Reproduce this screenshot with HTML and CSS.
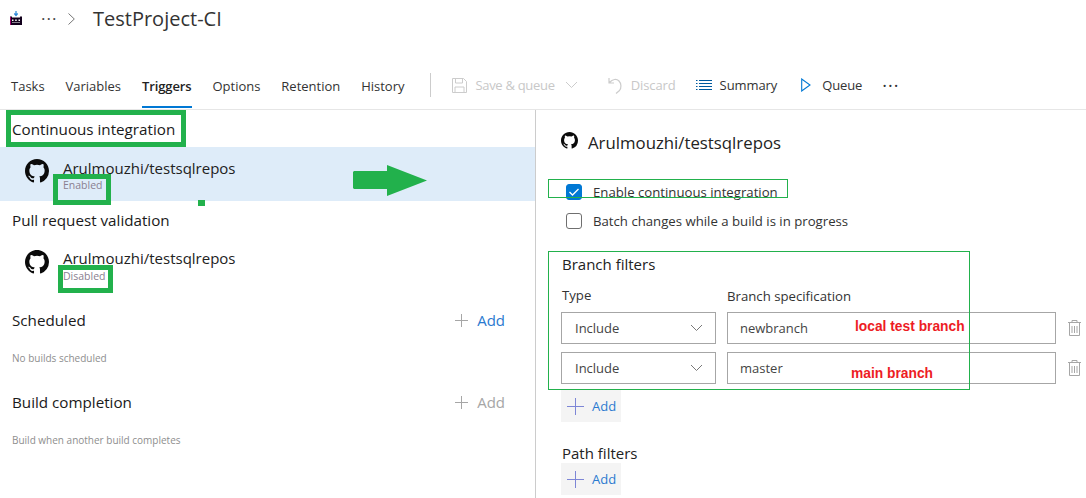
FILE: index.html
```html
<!DOCTYPE html>
<html lang="en">

    <head>
        <meta charset="UTF-8">
        <title>TestProject-CI</title>
        <link rel="stylesheet" href="styles.css">
    </head>

    <body>

        <header class="breadcrumb">
            <svg class="build-icon" width="12" height="14" viewBox="0 0 12 14">
                <path d="M6 0v4M4.300 2.500L6 4.500l1.700-2" fill="none" stroke="#2b88d8" stroke-width="1.200"/>
                <path d="M0 5.500h2v1h8v-1h2V14H0z" fill="#12001c"/>
                <path d="M2 8.500h1.500V10H2zM5.200 8.500h1.500V10H5.200zM8.500 8.500H10V10H8.500zM2 11.500h8V12H2z" fill="#fff"/>
                <path d="M.5 6v8" stroke="#a4006e" stroke-width="1"/>
            </svg>
            <span class="dots">···</span>
            <svg class="crumb-chevron" width="7" height="12" viewBox="0 0 7 12">
                <path d="M.5.500L6.300 6 .5 11.500" fill="none" stroke="#777" stroke-width="1"/>
            </svg>
            <h1>TestProject-CI</h1>
        </header>

        <nav class="toolbar">
            <div class="tab">Tasks</div>
            <div class="tab">Variables</div>
            <div class="tab active">Triggers</div>
            <div class="tab">Options</div>
            <div class="tab">Retention</div>
            <div class="tab">History</div>
            <div class="divider"></div>
            <div class="cmd disabled save">
                <svg width="15" height="15" viewBox="0 0 15 15">
                    <path d="M.5.500h11l3 3v11H.5zM3.500 1v4h7V1M3 14.500V9h9v5.500" fill="none" stroke="#ccc"/>
                </svg>
                <span>Save &amp; queue</span>
                <svg class="save-chevron" width="13" height="8" viewBox="0 0 13 8">
                    <path d="M1 1l5.500 5.500L12 1" fill="none" stroke="#ccc"/>
                </svg>
            </div>
            <div class="cmd disabled discard">
                <svg width="14" height="17" viewBox="0 0 14 17">
                    <path d="M1 1v5h5M1.500 5.500C4.500 2 8.500 1.500 11 4s2.500 7 .5 9.500L8 16.500" fill="none" stroke="#ccc" stroke-width="1.200"/>
                </svg>
                <span>Discard</span>
            </div>
            <div class="cmd summary">
                <svg width="16" height="11" viewBox="0 0 16 11">
                    <path d="M0 .500h1.500M3 .500h13M0 3.500h1.500M3 3.500h13M0 6.500h1.500M3 6.500h13M0 9.500h1.500M3 9.500h13" stroke="#005a9e"/>
                </svg>
                <span>Summary</span>
            </div>
            <div class="cmd queue">
                <svg width="10" height="14" viewBox="0 0 10 14">
                    <path d="M.7 1v12l8.300-6z" fill="none" stroke="#0078d4" stroke-width="1.100"/>
                </svg>
                <span>Queue</span>
            </div>
            <div class="more">···</div>
        </nav>

        <main class="content">
            <section class="left">
                <h2 class="ci-title">Continuous integration</h2>
                <div class="repo selected">
                    <svg class="gh" width="24" height="24" viewBox="0 0 16 16">
                        <path d="M8 0C3.580 0 0 3.580 0 8c0 3.540 2.290 6.530 5.470 7.590.4.070.55-.17.55-.38v-1.340c-2.230.48-2.700-1.070-2.700-1.070-.36-.930-.89-1.170-.89-1.170-.73-.5.050-.49.050-.49.800.060 1.220.830 1.220.830.710 1.220 1.870.870 2.330.660.070-.520.280-.870.510-1.070-1.780-.2-3.640-.89-3.640-3.950 0-.870.310-1.590.820-2.150-.080-.2-.360-1.020.080-2.120 0 0 .670-.210 2.200.820a7.600 7.600 0 0 1 4 0c1.530-1.040 2.200-.820 2.200-.820.440 1.100.160 1.920.080 2.120.510.560.820 1.270.820 2.150 0 3.070-1.870 3.750-3.650 3.950.290.250.540.730.540 1.480v2.200c0 .210.150.460.550.380A8 8 0 0 0 16 8c0-4.420-3.580-8-8-8z" fill="#0b0b0b"/>
                    </svg>
                    <div class="repo-text">
                        <div class="repo-name">Arulmouzhi/testsqlrepos</div>
                        <div class="repo-state">Enabled</div>
                    </div>
                </div>
                <h2 class="pr-title">Pull request validation</h2>
                <div class="repo">
                    <svg class="gh" width="24" height="24" viewBox="0 0 16 16">
                        <path d="M8 0C3.580 0 0 3.580 0 8c0 3.540 2.290 6.530 5.470 7.590.4.070.55-.17.55-.38v-1.340c-2.230.48-2.700-1.070-2.700-1.070-.36-.930-.89-1.170-.89-1.170-.73-.5.050-.49.050-.49.800.060 1.220.830 1.220.830.710 1.220 1.870.870 2.330.660.070-.520.280-.870.510-1.070-1.780-.2-3.640-.89-3.640-3.950 0-.870.310-1.590.820-2.150-.080-.2-.360-1.020.080-2.120 0 0 .670-.210 2.200.820a7.600 7.600 0 0 1 4 0c1.530-1.040 2.200-.820 2.200-.820.440 1.100.160 1.920.080 2.120.510.560.820 1.270.820 2.150 0 3.070-1.870 3.750-3.650 3.950.290.250.540.730.540 1.480v2.200c0 .210.150.460.550.380A8 8 0 0 0 16 8c0-4.420-3.580-8-8-8z" fill="#0b0b0b"/>
                    </svg>
                    <div class="repo-text">
                        <div class="repo-name">Arulmouzhi/testsqlrepos</div>
                        <div class="repo-state">Disabled</div>
                    </div>
                </div>
                <div class="add-head scheduled">
                    <h2>Scheduled</h2>
                    <div class="add-link"><span class="plus"></span>Add</div>
                </div>
                <p class="hint">No builds scheduled</p>
                <div class="add-head completion">
                    <h2>Build completion</h2>
                    <div class="add-link off"><span class="plus"></span>Add</div>
                </div>
                <p class="hint">Build when another build completes</p>
            </section>

            <section class="right">
                <div class="right-title">
                    <svg width="17" height="17" viewBox="0 0 16 16">
                        <path d="M8 0C3.580 0 0 3.580 0 8c0 3.540 2.290 6.530 5.470 7.590.4.070.55-.17.55-.38v-1.340c-2.230.48-2.700-1.070-2.700-1.070-.36-.930-.89-1.170-.89-1.170-.73-.5.050-.49.050-.49.800.060 1.220.830 1.220.830.710 1.220 1.870.870 2.330.660.070-.520.280-.870.510-1.070-1.780-.2-3.640-.89-3.640-3.950 0-.870.310-1.590.82-2.150-.080-.2-.360-1.020.080-2.120 0 0 .670-.210 2.200.82a7.600 7.600 0 0 1 4 0c1.530-1.040 2.200-.820 2.200-.820.440 1.100.160 1.920.080 2.120.510.560.820 1.270.820 2.150 0 3.070-1.870 3.750-3.650 3.950.290.250.540.730.540 1.480v2.200c0 .210.150.460.550.380A8 8 0 0 0 16 8c0-4.420-3.580-8-8-8z" fill="#0b0b0b"/>
                    </svg>
                    <span>Arulmouzhi/testsqlrepos</span>
                </div>
                <div class="check-row first">
                    <span class="checkbox on">
                        <svg width="12" height="10" viewBox="0 0 12 10"><path d="M1.500 5l3 3L10.500 2" fill="none" stroke="#fff" stroke-width="1.300"/></svg>
                    </span>
                    Enable continuous integration
                </div>
                <div class="check-row">
                    <span class="checkbox"></span>
                    Batch changes while a build is in progress
                </div>
                <h3 class="branch-title">Branch filters</h3>
                <div class="filter-labels">
                    <label class="type-label">Type</label>
                    <label class="spec-label">Branch specification</label>
                </div>
                <div class="filter-row">
                    <div class="select">Include
                        <svg width="13" height="8" viewBox="0 0 13 8"><path d="M1 1l5.500 5.500L12 1" fill="none" stroke="#777"/></svg>
                    </div>
                    <div class="input">newbranch</div>
                    <svg class="trash" width="13" height="16" viewBox="0 0 13 16">
                        <path d="M0 2.500h13M4 2.500V.500h5v2M1.500 3v12.500h10V3M4 6v7M6.500 6v7M9 6v7" fill="none" stroke="#a6a6a6"/>
                    </svg>
                </div>
                <div class="filter-row">
                    <div class="select">Include
                        <svg width="13" height="8" viewBox="0 0 13 8"><path d="M1 1l5.500 5.500L12 1" fill="none" stroke="#777"/></svg>
                    </div>
                    <div class="input">master</div>
                    <svg class="trash" width="13" height="16" viewBox="0 0 13 16">
                        <path d="M0 2.500h13M4 2.500V.500h5v2M1.500 3v12.500h10V3M4 6v7M6.500 6v7M9 6v7" fill="none" stroke="#a6a6a6"/>
                    </svg>
                </div>
                <div class="add-btn"><span class="plus"></span>Add</div>
                <h3 class="path-title">Path filters</h3>
                <div class="add-btn"><span class="plus"></span>Add</div>
            </section>
        </main>

        <!-- annotations drawn on top of the screenshot -->
        <div class="mark mark-ci"></div>
        <div class="mark mark-enabled"></div>
        <div class="mark mark-disabled"></div>
        <div class="mark-dot"></div>
        <svg class="mark-arrow" width="76" height="32" viewBox="0 0 76 32">
            <path d="M2 6h33V0l40 15.500L35 31v-7H2l-1-1V7z" fill="#22b14c"/>
        </svg>
        <div class="thin-box box-check"></div>
        <div class="thin-box box-branch"></div>
        <div class="note note-local">local test branch</div>
        <div class="note note-main">main branch</div>

    </body>

</html>
```

FILE: styles.css
```css
* {
    box-sizing: border-box;
}

html,
body {
    height: 100%;
}

body {
    margin: 0;
    position: relative;
    overflow: hidden;
    background-color: #fff;
    color: #1a1a1a;
    font-family: "Open Sans", "Noto Sans", Arial, sans-serif;
    font-size: 13px;
}

h1,
h2,
h3,
p {
    margin: 0;
    font-weight: 400;
}

.breadcrumb {
    height: 70px;
    padding: 7px 0 0 10px;
    display: flex;
    align-items: flex-start;
}

.build-icon {
    margin-top: 4px;
}

.dots {
    margin: 0 0 0 19px;
    width: 18px;
    font-size: 17px;
    line-height: 24px;
    letter-spacing: 1px;
    color: #444;
}

.crumb-chevron {
    margin: 6px 0 0 9px;
}

.breadcrumb h1 {
    margin-left: 18px;
    font-size: 20px;
    line-height: 24px;
    color: #333;
}

.toolbar {
    height: 40px;
    padding-left: 11px;
    display: flex;
    align-items: flex-start;
    border-bottom: 1px solid #e6e6e6;
}

.tab {
    height: 38px;
    margin-right: 20.900px;
    padding-top: 7px;
    line-height: 18px;
    font-size: 13px;
    color: #333;
}

.tab.active {
    position: relative;
    font-weight: 600;
    letter-spacing: -.1px;
    color: #222;
}

.tab.active::after {
    content: "";
    position: absolute;
    left: 0;
    right: 0;
    bottom: 0;
    height: 2px;
    background-color: #0078d4;
}

.divider {
    width: 1px;
    height: 24px;
    margin: 3px 0 0 5px;
    background-color: #ccc;
}

.cmd {
    display: flex;
    align-items: center;
    gap: 8px;
    height: 30px;
    font-size: 13px;
    letter-spacing: -.1px;
    color: #333;
}

.cmd.disabled {
    color: #c8c8c8;
}

.save {
    margin-left: 21px;
    letter-spacing: -.3px;
}

.save-chevron {
    margin-left: 2px;
}

.discard {
    margin-left: 30px;
    gap: 9px;
}

.summary {
    margin-left: 20px;
}

.queue {
    margin-left: 24px;
    gap: 11px;
}

.more {
    margin-left: 20px;
    font-size: 18px;
    line-height: 30px;
    letter-spacing: 1px;
    color: #333;
}

.content {
    height: 388px;
    display: flex;
}

.left {
    width: 536px;
    border-right: 1px solid #ccc;
}

.left h2 {
    font-size: 15.200px;
    line-height: 20px;
    color: #1a1a1a;
}

.ci-title {
    padding: 9px 0 8px 12px;
}

.pr-title {
    padding: 9px 0 0 12px;
}

.repo {
    height: 54px;
    padding: 10px 0 0 25px;
    display: flex;
    gap: 14px;
}

.repo.selected {
    background-color: #deecf9;
    padding-top: 12px;
}

.pr-title + .repo {
    margin-top: 6px;
    height: 50px;
    padding-top: 14px;
}

.repo-name {
    margin-top: -1px;
    font-size: 15px;
    line-height: 20px;
    color: #222;
}

.pr-title + .repo .repo-name {
    margin-top: -2px;
}

.repo-state {
    font-size: 10.500px;
    line-height: 14px;
    color: #8a8090;
}

.pr-title + .repo .repo-state {
    margin-top: 1px;
}

.add-head {
    display: flex;
    justify-content: space-between;
    padding: 0 30px 0 12px;
}

.scheduled {
    margin-top: 24px;
}

.completion {
    margin-top: 27px;
}

.add-link {
    display: flex;
    align-items: center;
    font-size: 15px;
    line-height: 20px;
    color: #2a7ad0;
}

.add-link.off {
    color: #a6a6a6;
}

.plus {
    width: 13px;
    height: 13px;
    margin-right: 9px;
    background:
        linear-gradient(#a6a6a6, #a6a6a6) center / 100% 1px no-repeat,
        linear-gradient(#a6a6a6, #a6a6a6) center / 1px 100% no-repeat;
}

.hint {
    margin-top: 21px;
    padding-left: 12px;
    font-size: 10px;
    line-height: 14px;
    color: #8e8e8e;
}

.right {
    flex: 1;
    padding-left: 25px;
}

.right-title {
    display: flex;
    align-items: flex-start;
    gap: 10px;
    height: 34px;
    padding-top: 22px;
    font-size: 16.800px;
    line-height: 22px;
    color: #222;
}

.right-title svg {
    flex: none;
}

.check-row {
    display: flex;
    align-items: center;
    gap: 11px;
    height: 20px;
    margin: 9px 0 0 5px;
    font-size: 13.200px;
    color: #333;
}

.check-row.first {
    margin-top: 38px;
}

.checkbox {
    width: 16px;
    height: 16px;
    display: flex;
    align-items: center;
    justify-content: center;
    border: 1px solid #6f6f6f;
    border-radius: 3px;
}

.checkbox.on {
    background-color: #0078d4;
    border-color: #0078d4;
}

.branch-title,
.path-title {
    font-size: 15px;
    line-height: 20px;
    padding-left: 1px;
    color: #222;
}

.branch-title {
    margin-top: 23px;
}

.path-title {
    margin-top: 22px;
    line-height: 19px;
}

.filter-labels {
    display: flex;
    margin-top: 12px;
    height: 26px;
    font-size: 13.200px;
    color: #333;
}

.type-label {
    width: 166px;
    padding-left: 1px;
}

.spec-label {
    padding-top: 1px;
}

.filter-row {
    display: flex;
    align-items: center;
    margin-bottom: 8px;
}

.filter-row + .filter-row {
    margin-bottom: 6px;
}

.select,
.input {
    height: 32px;
    display: flex;
    align-items: center;
    font-size: 13px;
    border: 1px solid #a6a6a6;
    color: #444;
}

.select {
    width: 155px;
    justify-content: space-between;
    padding: 0 12px 0 13px;
}

.input {
    width: 329px;
    margin-left: 11px;
    padding-left: 12px;
}

.trash {
    margin-left: 12px;
}

.add-btn {
    width: 60px;
    height: 32px;
    display: flex;
    align-items: center;
    padding-left: 6px;
    background-color: #f4f4f4;
    font-size: 13px;
    color: #2a7ad0;
}

.add-btn .plus {
    width: 17px;
    height: 17px;
    margin-right: 8px;
    background:
        linear-gradient(#7d86d6, #7d86d6) center / 100% 1px no-repeat,
        linear-gradient(#7d86d6, #7d86d6) center / 1px 100% no-repeat;
}

/* annotations */
.mark {
    position: absolute;
    border: 5px solid #22b14c;
}

.mark-ci {
    left: 6px;
    top: 110px;
    width: 180px;
    height: 37px;
}

.mark-enabled {
    left: 53px;
    top: 174px;
    width: 58px;
    height: 31px;
}

.mark-disabled {
    left: 58px;
    top: 265px;
    width: 55px;
    height: 28px;
}

.mark-dot {
    position: absolute;
    left: 198px;
    top: 200px;
    width: 7px;
    height: 6px;
    background-color: #22b14c;
}

.mark-arrow {
    position: absolute;
    left: 352px;
    top: 165px;
}

.thin-box {
    position: absolute;
    border: 1px solid #22b14c;
}

.box-check {
    left: 548px;
    top: 179px;
    width: 240px;
    height: 19px;
}

.box-branch {
    left: 548px;
    top: 251px;
    width: 422px;
    height: 139px;
}

.note {
    position: absolute;
    font-family: "Liberation Sans", Arial, sans-serif;
    font-size: 13.800px;
    line-height: 14px;
    font-weight: 700;
    color: #ed1c24;
}

.note-local {
    left: 855px;
    top: 320px;
}

.note-main {
    left: 851px;
    top: 367px;
}
```
